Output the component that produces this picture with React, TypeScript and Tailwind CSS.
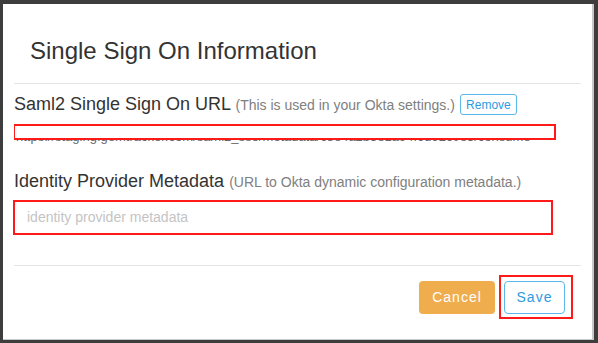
import React from 'react';

const font = { fontFamily: '"Liberation Sans", Arial, sans-serif' };

export default function App() {
    return (
        <div
            className="w-[598px] h-[343px] bg-[#3d3d3d] pt-[4px] pl-[3px] pr-[4px] pb-[3px]"
            style={font}
        >
            <div className="h-full bg-white border-r-2 border-b border-[#c8c8c8] px-[11px] flex flex-col">
                {/* Header */}
                <div className="pt-[34px] pb-[19px] pl-[16px] border-b border-[#e5e5e5]">
                    <h4 className="text-[24px] leading-[26px] text-[#333]">Single Sign On Information</h4>
                </div>

                {/* Body */}
                <div className="pt-[9px] pb-[30px] border-b border-[#e5e5e5]">
                    <div className="flex items-center h-[23px]">
                        <span className="text-[18px] leading-[22px] text-[#333] whitespace-nowrap">
                            Saml2 Single Sign On URL{' '}
                            <small className="text-[14px] text-[#808080]">(This is used in your Okta settings.)</small>
                        </span>
                        <button className="ml-[5px] h-[21px] w-[57px] rounded-[3px] border border-[#5bb8ea] bg-white text-[12px] leading-none text-[#2e9be0] flex items-center justify-center">
                            Remove
                        </button>
                    </div>

                    <div className="relative mt-[8px] h-[24px] overflow-hidden">
                        <div className="pt-[5px] pl-[2px] text-[13px] leading-[16px] text-[#666] whitespace-nowrap">
                            https://staging.gemtracker.com/saml2_sso/metadata/c8e4a2b5e1a94f6d92c0e3/consume
                        </div>
                        <div className="absolute -left-[1px] top-0 w-[543px] h-[16px] bg-white border-2 border-[#ff1a1a]" />
                    </div>

                    <div className="mt-[22px] text-[18px] leading-[22px] text-[#333] whitespace-nowrap">
                        Identity Provider Metadata{' '}
                        <small className="text-[14px] text-[#808080]">(URL to Okta dynamic configuration metadata.)</small>
                    </div>

                    <div className="mt-[7px] -ml-[1px] w-[540px] h-[35px] border-2 border-[#ff1a1a] flex items-center pl-[12px]">
                        <span className="text-[14px] text-[#c4c4c4]">identity provider metadata</span>
                    </div>
                </div>

                {/* Footer */}
                <div className="flex justify-end items-start pt-[15px] pr-[16px] gap-[9px]">
                    <button className="h-[33px] w-[76px] rounded-[4px] bg-[#f0ad4e] text-white text-[14px] tracking-[1px] flex items-center justify-center">
                        Cancel
                    </button>
                    <div className="relative">
                        <button className="h-[33px] w-[61px] rounded-[4px] border border-[#5bb8ea] bg-white text-[#2e9be0] text-[14px] tracking-[1px] flex items-center justify-center">
                            Save
                        </button>
                        <div className="absolute -left-[5px] -right-[8px] -top-[6px] -bottom-[5px] border-2 border-[#ff1a1a]" />
                    </div>
                </div>
            </div>
        </div>
    );
}
